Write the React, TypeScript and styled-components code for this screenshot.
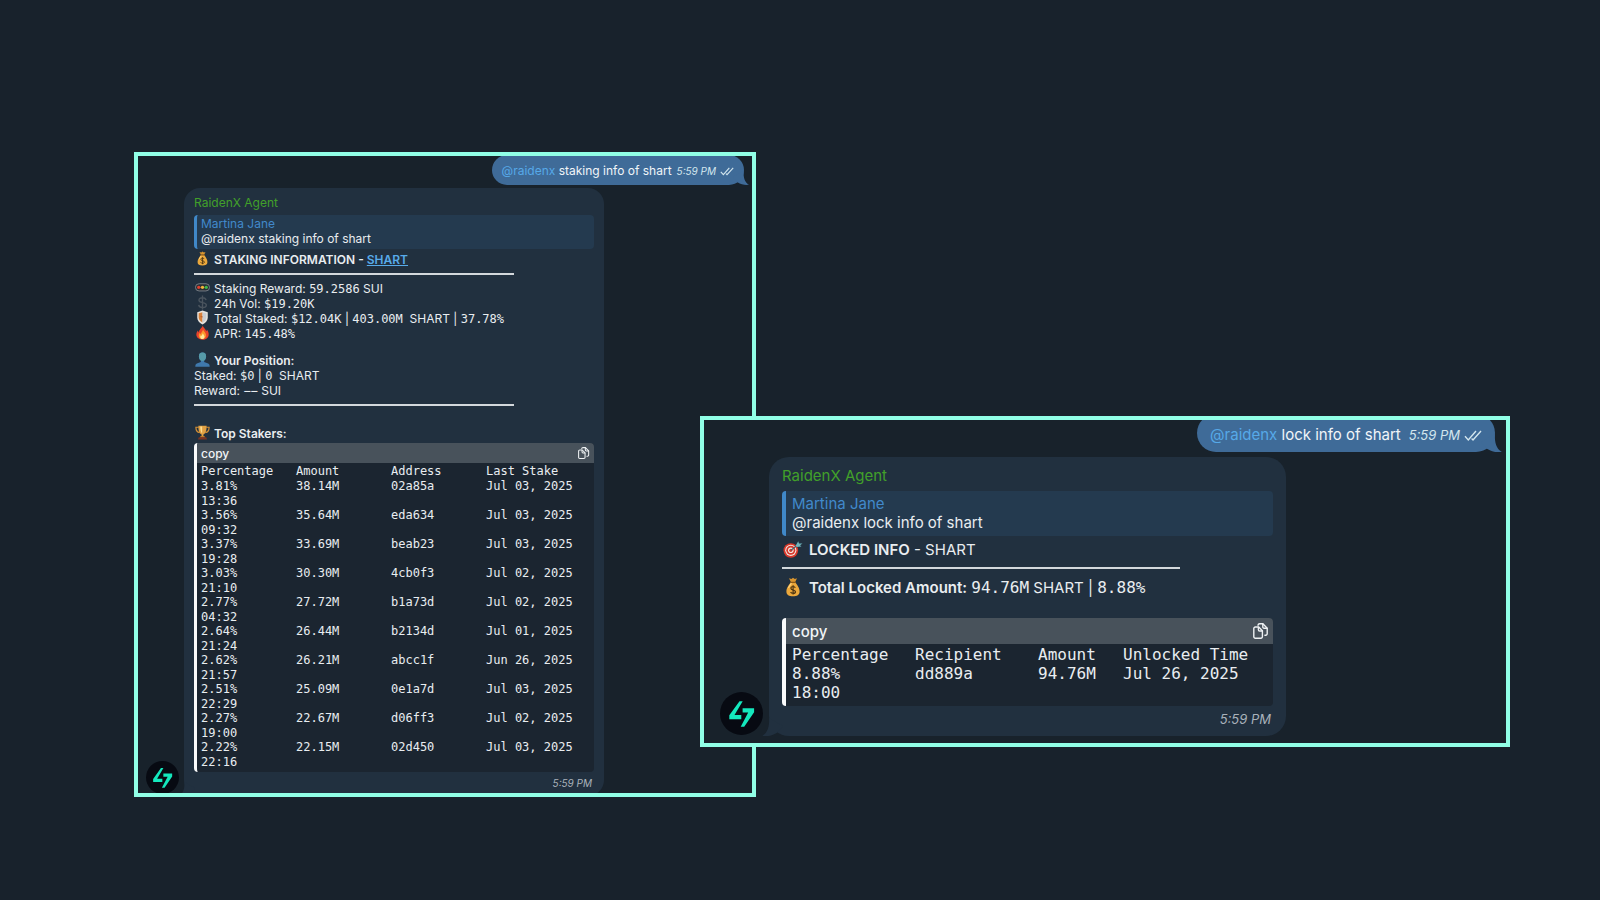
import React from "react";
import styled, { createGlobalStyle, ThemeProvider } from "styled-components";

const compact = {
  font: 12, mono: 12, small: 10, line: 15,
  avatar: 33, avatarGap: 5, avatarLift: 2, rowLeft: 8, rowPull: -3,
  bubbleWidth: 420, padTop: 7, padX: 10, padBottom: 5, radius: 16,
  quoteGap: 5, quotePadTop: 1, quotePadBottom: 3, bar: 3, quoteLeft: 4,
  icon: 15, slot: 20, titleGap: 3, ruleGap: 6, ruleAfter: 6, ruleWidth: "80%",
  codeHead: 20, codeEnd: 3, copyIcon: 12, timeGap: 4,
  outHeight: 30, outTop: -1, outRight: 8, outPad: 10, outAfter: 3, outShift: 1, outGap: 5, ticks: 14,
  tail: 16,
};

const large: typeof compact = {
  font: 15, mono: 16, small: 13, line: 19,
  avatar: 43, avatarGap: 6, avatarLift: 1, rowLeft: 16, rowPull: 7,
  bubbleWidth: 517, padTop: 9, padX: 13, padBottom: 7, radius: 20,
  quoteGap: 6, quotePadTop: 3, quotePadBottom: 4, bar: 4, quoteLeft: 6,
  icon: 20, slot: 27, titleGap: 4, ruleGap: 8, ruleAfter: 9, ruleWidth: "81%",
  codeHead: 26, codeEnd: 4, copyIcon: 16, timeGap: 4,
  outHeight: 38, outTop: -6, outRight: 11, outPad: 13, outAfter: 5, outShift: 2, outGap: 8, ticks: 18,
  tail: 21,
};

declare module "styled-components" {
  export interface DefaultTheme {
    font: number; mono: number; small: number; line: number;
    avatar: number; avatarGap: number; avatarLift: number; rowLeft: number; rowPull: number;
    bubbleWidth: number; padTop: number; padX: number; padBottom: number; radius: number;
    quoteGap: number; quotePadTop: number; quotePadBottom: number; bar: number; quoteLeft: number;
    icon: number; slot: number; titleGap: number; ruleGap: number; ruleAfter: number; ruleWidth: string;
    codeHead: number; codeEnd: number; copyIcon: number; timeGap: number;
    outHeight: number; outTop: number; outRight: number; outPad: number; outAfter: number;
    outShift: number; outGap: number; ticks: number; tail: number;
  }
}

const Global = createGlobalStyle`
  *, *::before, *::after { box-sizing: border-box; }
  body { margin: 0; background: #18222c; }
`;

const Stage = styled.main`
  display: flex;
  align-items: flex-start;
  min-height: 100vh;
  padding: 152px 90px 100px 134px;
  font-family: Inter, "Liberation Sans", sans-serif;
  color: #e9edf0;
`;

const Panel = styled.section<{ $grow: number }>`
  flex: ${(p) => p.$grow} 1 0;
  min-width: 0;
  overflow: hidden;
  border: 4px solid #90ffe6;
  background: #18222b;
  font-size: ${(p) => p.theme.font}px;
  line-height: ${(p) => p.theme.line}px;
  white-space: nowrap;
`;

const FrontPanel = styled(Panel)`
  position: relative;
  margin: 264px 0 0 -56px;
`;

const Outgoing = styled.div`
  position: relative;
  display: flex;
  align-items: center;
  width: fit-content;
  height: ${(p) => p.theme.outHeight}px;
  margin: ${(p) => `${p.theme.outTop}px ${p.theme.outRight}px ${p.theme.outAfter}px auto`};
  padding: ${(p) => `${p.theme.outShift}px ${p.theme.outPad}px 0`};
  border-radius: ${(p) => p.theme.outHeight / 2}px;
  background: #3f6b98;
  color: #f1f5f8;
`;

const Mention = styled.a`
  color: #56a9e8;
  text-decoration: none;
`;

const Time = styled.time`
  font-size: ${(p) => p.theme.small}px;
  font-style: italic;
`;

const SentTime = styled(Time)`
  display: flex;
  align-items: center;
  gap: 4px;
  margin-left: ${(p) => p.theme.outGap}px;
  padding-top: 2px;
  color: #d3e6ee;
`;

const Tail = styled.svg<{ $side: "left" | "right" }>`
  position: absolute;
  bottom: 0;
  ${(p) => p.$side}: -${(p) => Math.round(p.theme.tail / 3)}px;
  width: ${(p) => p.theme.tail}px;
  height: auto;
  transform: ${(p) => (p.$side === "left" ? "scaleX(-1)" : "none")};
`;

const MessageRow = styled.div`
  display: flex;
  align-items: flex-end;
  gap: ${(p) => p.theme.avatarGap}px;
  margin-bottom: ${(p) => p.theme.rowPull}px;
  padding-left: ${(p) => p.theme.rowLeft}px;
`;

const Avatar = styled.svg`
  flex: none;
  width: ${(p) => p.theme.avatar}px;
  height: ${(p) => p.theme.avatar}px;
  margin-bottom: ${(p) => p.theme.avatarLift}px;
  position: relative;
  z-index: 1;
`;

const Bubble = styled.article`
  position: relative;
  display: flex;
  flex-direction: column;
  width: 100%;
  max-width: ${(p) => p.theme.bubbleWidth}px;
  padding: ${(p) => `${p.theme.padTop}px ${p.theme.padX}px ${p.theme.padBottom}px`};
  border-radius: ${(p) => p.theme.radius}px;
  background: #21303f;
`;

const Sender = styled.div`
  color: #41a02a;
`;

const Quote = styled.blockquote`
  margin: ${(p) => p.theme.quoteGap}px 0 0;
  padding: ${(p) => `${p.theme.quotePadTop}px 0 ${p.theme.quotePadBottom}px ${p.theme.quoteLeft}px`};
  border-left: ${(p) => p.theme.bar}px solid #4088c8;
  border-radius: 4px;
  background: #243a4f;
`;

const QuoteName = styled.div`
  color: #4189cb;
`;

const Subtitle = styled.h3`
  margin: 0;
  font-size: inherit;
  font-weight: 600;
  white-space: pre;
`;

const Title = styled(Subtitle)`
  margin-top: ${(p) => p.theme.titleGap}px;
`;

const Light = styled.span`
  font-weight: 400;
`;

const Strong = styled.strong`
  font-weight: 600;
`;

const TokenLink = styled.a`
  color: #58abea;
`;

const Rule = styled.hr`
  width: ${(p) => p.theme.ruleWidth};
  height: 2px;
  margin: ${(p) => `${p.theme.ruleGap}px 0 ${p.theme.ruleAfter}px`};
  border: 0;
  background: #d3d8dc;
`;

const Group = styled.div<{ $before?: number; $after?: number }>`
  margin-top: ${(p) => p.$before ?? 0}px;
  margin-bottom: ${(p) => p.$after ?? 0}px;
`;

const Line = styled.div`
  height: ${(p) => p.theme.line}px;
  white-space: pre;
`;

const Slot = styled.span`
  display: inline-flex;
  align-items: center;
  width: ${(p) => p.theme.slot}px;
  height: ${(p) => p.theme.line}px;
  padding: 0 0 2px 1px;
  vertical-align: top;
`;

const Glyph = styled.svg`
  flex: none;
  width: ${(p) => p.theme.icon}px;
  height: ${(p) => p.theme.icon}px;
`;

const Mono = styled.span`
  font-family: "DejaVu Sans Mono", "Liberation Mono", monospace;
  font-size: ${(p) => p.theme.mono}px;
  line-height: 1;
`;

const Code = styled.div`
  border-left: ${(p) => p.theme.bar}px solid #fafbfc;
  border-radius: 4px;
  background: #1b2530;
  overflow: hidden;
`;

const CopyBar = styled.button`
  display: flex;
  align-items: center;
  justify-content: space-between;
  width: 100%;
  height: ${(p) => p.theme.codeHead}px;
  padding: 0 4px 0 ${(p) => p.theme.quoteLeft}px;
  border: 0;
  background: #48525b;
  color: #f1f4f6;
  font: inherit;
  font-weight: 500;
  cursor: pointer;
`;

const CopyIcon = styled.svg`
  width: ${(p) => p.theme.copyIcon}px;
  height: ${(p) => p.theme.copyIcon}px;
`;

const Table = styled.table`
  table-layout: fixed;
  width: 100%;
  margin: ${(p) => `1px 0 ${p.theme.codeEnd}px`};
  border-collapse: collapse;
  font-family: "DejaVu Sans Mono", "Liberation Mono", monospace;
  font-size: ${(p) => p.theme.mono}px;
  text-align: left;

  th, td {
    padding: 0 0 0 ${(p) => p.theme.quoteLeft}px;
    font-weight: 400;
    vertical-align: top;
  }
`;

const Clock = styled.div<{ $line: number }>`
  line-height: ${(p) => p.$line}px;
`;

const Received = styled(Time)`
  align-self: flex-end;
  margin-top: ${(p) => p.theme.timeGap}px;
  padding-right: 2px;
  color: #a9b2bb;
`;

const MoneyBag = () => (
  <Glyph viewBox="0 0 20 20" aria-label="money bag">
    <path d="M6 1.2 8.4 2 10 .8 11.8 2 14 1.2 12.2 5H7.9Z" fill="#d9952f" />
    <path d="M7.8 5.2h4.5C14 8 16.6 10.500 16.600 14.500c0 3.600-2.600 4.700-6.600 4.700s-6.600-1.100-6.600-4.700C3.400 10.500 6.100 8 7.800 5.200Z" fill="#eba83c" />
    <path d="M5.500 11c.8-2 2.200-3.600 3-4.800" stroke="#ffd27a" strokeWidth="1.200" fill="none" />
    <path d="M7.300 5.400h5.500" stroke="#8d5a17" strokeWidth="1.300" />
    <path d="M12.300 10.700c-.4-.8-1.200-1.200-2.200-1.200-1.300 0-2.200.6-2.200 1.700 0 2.500 4.600 1.200 4.600 3.600 0 1.100-1 1.700-2.400 1.700-1.200 0-2.100-.5-2.500-1.400M10.100 8.300v9.300" stroke="#4d3412" strokeWidth="1.200" fill="none" />
  </Glyph>
);

const Signal = () => (
  <Glyph viewBox="0 0 20 20" aria-label="signal">
    <rect x=".6" y="5" width="18.800" height="9.600" rx="4.800" fill="#2a2f35" stroke="#858c93" strokeWidth="1.100" />
    <circle cx="5" cy="9.800" r="2.200" fill="#e2402f" />
    <circle cx="10" cy="9.800" r="2.200" fill="#f2b53a" />
    <circle cx="15" cy="9.800" r="2.200" fill="#40b84c" />
  </Glyph>
);

const Dollar = () => (
  <Glyph viewBox="0 0 20 20" aria-label="dollar">
    <path d="M14.800 6.800C14.300 4.700 12.500 3.600 10 3.600c-2.800 0-4.700 1.300-4.700 3.300 0 4.500 9.800 2 9.800 6.500 0 2-2 3.400-5 3.400-2.800 0-4.800-1.200-5.200-3.500M10 .8v18.600" stroke="#4a545e" strokeWidth="1.800" fill="none" />
  </Glyph>
);

const Shield = () => (
  <Glyph viewBox="0 0 20 20" aria-label="shield">
    <path d="M10 .8 17 3v7c0 4.500-3.200 7.300-7 9.200C6.200 17.300 3 14.500 3 10V3Z" fill="#e9e4dd" />
    <path d="M10 3v13.700C7 15 4.900 13 4.900 9.800V4.300Z" fill="#d9813a" />
    <path d="M10 3v13.700C13 15 15.100 13 15.100 9.800V4.300Z" fill="#c9cdd2" />
    <path d="M10 3v5L6.500 9 10 10v6.700" fill="#b85a2a" />
  </Glyph>
);

const Fire = () => (
  <Glyph viewBox="0 0 20 20" aria-label="fire">
    <path d="M10.300.5c.6 2.700 4 4.700 4.700 7.800.6-.6.8-1.500.8-2.300 1.700 2 2.700 4.500 2.400 7.200-.4 3.800-3.700 6.300-8.200 6.300s-7.900-2.500-8.200-6.100C1.600 10.800 2.600 9 3.900 7.400c.1 1.100.5 2 1.200 2.600C5 5.500 9.500 4.300 10.300.5Z" fill="#e9432a" />
    <path d="M10.700 5.500c.2 2.500 3.800 4 4 7.500.2 3.400-1.700 5.700-4.800 5.700-3 0-5.100-2-4.900-5 .1-1.500.8-2.500 1.700-3.400.2 1 .6 1.500 1.200 1.900 0-2.700 2.600-3.900 2.800-6.700Z" fill="#fb9a2c" />
    <path d="M10.400 11c.4 1.700 2.400 2.600 2.300 4.700-.1 1.900-1.200 3-2.900 3S7 17.500 7 15.900c0-1 .4-1.600.9-2.200.2.500.5.8.9 1 .1-1.500 1.400-2.200 1.600-3.700Z" fill="#ffe99a" />
  </Glyph>
);

const Person = () => (
  <Glyph viewBox="0 0 20 20" aria-label="person">
    <path d="M10 .6c3.300 0 4.900 2.200 4.800 5.300-.1 2.500-1.200 4.500-2.600 5.500v1.800l5.300 2c1.500.6 2 1.800 2.100 4.300H.4c.1-2.500.6-3.700 2.100-4.300l5.300-2v-1.800c-1.400-1-2.500-3-2.600-5.500C5.100 2.800 6.700.6 10 .6Z" fill="#3f79ad" />
    <path d="M10 .6c3.300 0 4.900 2.200 4.800 5.300-.1 2.500-1.200 4.500-2.600 5.500-.8.6-3.600.6-4.400 0-1.400-1-2.500-3-2.600-5.500C5.100 2.800 6.700.6 10 .6Z" fill="#569aa8" />
  </Glyph>
);

const Trophy = () => (
  <Glyph viewBox="0 0 20 20" aria-label="trophy">
    <path d="M5 3H1.200c0 4 1.500 6.700 5 7.200M15 3h3.800c0 4-1.500 6.700-5 7.200" stroke="#d38f35" strokeWidth="1.600" fill="none" />
    <path d="M4.500 1h11c0 6-1 10.500-4.300 11.500v2.500H8.800v-2.500C5.500 11.500 4.500 7 4.500 1Z" fill="#e0a043" />
    <path d="M7 2h2.500v9C7.500 9.500 7 6 7 2Z" fill="#ffdc8c" />
    <path d="M7.500 14.500h5l1 2h-7Z" fill="#c07a2a" />
    <path d="M5 16.400h10l1 3H4Z" fill="#7d3420" />
  </Glyph>
);

const Target = () => (
  <Glyph viewBox="0 0 20 20" aria-label="target">
    <ellipse cx="7.800" cy="11.500" rx="7.300" ry="7.300" fill="#d8382b" />
    <circle cx="7.800" cy="11.300" r="5.600" fill="#f1e6e0" />
    <circle cx="7.800" cy="11.300" r="4.500" fill="#d8382b" />
    <circle cx="7.800" cy="11.300" r="2.800" fill="#f1e6e0" />
    <circle cx="7.800" cy="11.300" r="1.600" fill="#d8382b" />
    <path d="M8 11.300 14.500 6" stroke="#46616b" strokeWidth="1.200" />
    <path d="M12.700 6.700 15.200 2.300 16 4.500 19.500 4.600 17 6.300 18.500 7.500 13.800 7.900Z" fill="#6fb6bd" />
  </Glyph>
);

const Copy = () => (
  <CopyIcon viewBox="0 0 16 16" fill="none" stroke="#eef1f3" strokeWidth="1.400" strokeLinejoin="round" strokeLinecap="round" aria-hidden="true">
    <path d="M.8 5.500A1.500 1.500 0 0 1 2.300 4h3.400l3.700 3.800v6a1.500 1.500 0 0 1-1.500 1.500H2.300a1.500 1.500 0 0 1-1.500-1.500Z" />
    <path d="M5.400 4.200v2.600A1.200 1.200 0 0 0 6.600 8h2.600" />
    <path d="M5 2.200A1.700 1.700 0 0 1 6.600.8h3.300l4.300 4.400v5.600a1.500 1.500 0 0 1-1.500 1.500h-.8" />
    <path d="M9.800 1v3a1.200 1.200 0 0 0 1.200 1.200h3" />
  </CopyIcon>
);

const Ticks = styled.svg`
  width: ${(p) => p.theme.ticks}px;
  height: auto;
`;

const DoubleTick = () => (
  <Ticks viewBox="0 0 18 11" fill="none" stroke="#d3e6ee" strokeWidth="1.400" aria-label="read">
    <path d="M1 6.300 4.300 9.900 12 1M7.600 8.600 9 9.900 17 1" />
  </Ticks>
);

const BubbleTail = ({ side, color }: { side: "left" | "right"; color: string }) => (
  <Tail $side={side} viewBox="0 0 16 14" aria-hidden="true">
    <path d="M10.500 0C10.500 7 11.500 11 16 13.800C12 14.300 8 13.500 4.500 11.300L0 6Z" fill={color} />
  </Tail>
);

const Bolt = () => (
  <Avatar viewBox="0 0 43 43" aria-label="RaidenX">
    <circle cx="21.500" cy="21.500" r="21.500" fill="#070a12" />
    <path d="M19.500 9.200h3.200L14.500 23h6.800v4.300H9.300v-4Z" fill="#14e8bd" />
    <path d="M22.600 16.300h11.500v4L24.200 34.800h-3.500l7.500-14.200h-5.600Z" fill="#14e8bd" />
  </Avatar>
);

function Sent({ text }: { text: string }) {
  return (
    <Outgoing>
      <span><Mention href="#raidenx">@raidenx</Mention> {text}</span>
      <SentTime>5:59 PM <DoubleTick /></SentTime>
      <BubbleTail side="right" color="#3f6b98" />
    </Outgoing>
  );
}

function Reply({ text, children }: { text: string; children: React.ReactNode }) {
  return (
    <MessageRow>
      <Bolt />
      <Bubble>
        <BubbleTail side="left" color="#21303f" />
        <Sender>RaidenX Agent</Sender>
        <Quote>
          <QuoteName>Martina Jane</QuoteName>
          <div>@raidenx {text}</div>
        </Quote>
        {children}
        <Received>5:59 PM</Received>
      </Bubble>
    </MessageRow>
  );
}

type CodeTableProps = { heads: string[]; widths: number[]; rows: string[][]; clockLine: number };

function CodeTable({ heads, widths, rows, clockLine }: CodeTableProps) {
  return (
    <Code>
      <CopyBar type="button">copy <Copy /></CopyBar>
      <Table>
        <colgroup>{widths.map((w, i) => <col key={i} width={w} />)}<col /></colgroup>
        <thead><tr>{heads.map((h) => <th key={h} scope="col">{h}</th>)}</tr></thead>
        <tbody>
          {rows.map(([share, clock, ...rest]) => (
            <tr key={share}>
              <td>{share}<Clock $line={clockLine}>{clock}</Clock></td>
              {rest.map((cell) => <td key={cell}>{cell}</td>)}
            </tr>
          ))}
        </tbody>
      </Table>
    </Code>
  );
}

const stakers = [
  ["3.81%", "13:36", "38.14M", "02a85a", "Jul 03, 2025"],
  ["3.56%", "09:32", "35.64M", "eda634", "Jul 03, 2025"],
  ["3.37%", "19:28", "33.69M", "beab23", "Jul 03, 2025"],
  ["3.03%", "21:10", "30.30M", "4cb0f3", "Jul 02, 2025"],
  ["2.77%", "04:32", "27.72M", "b1a73d", "Jul 02, 2025"],
  ["2.64%", "21:24", "26.44M", "b2134d", "Jul 01, 2025"],
  ["2.62%", "21:57", "26.21M", "abcc1f", "Jun 26, 2025"],
  ["2.51%", "22:29", "25.09M", "0e1a7d", "Jul 03, 2025"],
  ["2.27%", "19:00", "22.67M", "d06ff3", "Jul 02, 2025"],
  ["2.22%", "22:16", "22.15M", "02d450", "Jul 03, 2025"],
];

const locks = [["8.88%", "18:00", "dd889a", "94.76M", "Jul 26, 2025"]];

export default function App() {
  return (
    <>
      <Global />
      <Stage>
        <ThemeProvider theme={compact}>
          <Panel $grow={614}>
            <Sent text="staking info of shart" />
            <Reply text="staking info of shart">
              <Title><Slot><MoneyBag /></Slot>STAKING INFORMATION - <TokenLink href="#shart">SHART</TokenLink></Title>
              <Rule />
              <Group>
                <Line><Slot><Signal /></Slot>Staking Reward: <Mono>59.2586</Mono> SUI</Line>
                <Line><Slot><Dollar /></Slot>24h Vol: <Mono>$19.20K</Mono></Line>
                <Line><Slot><Shield /></Slot>Total Staked: <Mono>$12.04K</Mono> | <Mono>403.00M</Mono>{"  SHART | "}<Mono>37.78%</Mono></Line>
                <Line><Slot><Fire /></Slot>APR: <Mono>145.48%</Mono></Line>
              </Group>
              <Group $before={12}>
                <Subtitle><Slot><Person /></Slot>Your Position:</Subtitle>
                <Line>Staked: <Mono>$0</Mono> | <Mono>0</Mono>{"  SHART"}</Line>
                <Line>Reward: <Mono>−−</Mono> SUI</Line>
              </Group>
              <Rule />
              <Group $before={14} $after={2}>
                <Subtitle><Slot><Trophy /></Slot>Top Stakers:</Subtitle>
              </Group>
              <CodeTable
                heads={["Percentage", "Amount", "Address", "Last Stake"]}
                widths={[95, 95, 95]}
                rows={stakers}
                clockLine={14}
              />
            </Reply>
          </Panel>
        </ThemeProvider>
        <ThemeProvider theme={large}>
          <FrontPanel $grow={802}>
            <Sent text="lock info of shart" />
            <Reply text="lock info of shart">
              <Title><Slot><Target /></Slot>LOCKED INFO<Light> - SHART</Light></Title>
              <Rule />
              <Group $after={21}>
                <Line><Slot><MoneyBag /></Slot><Strong>Total Locked Amount:</Strong> <Mono>94.76M</Mono> SHART | <Mono>8.88%</Mono></Line>
              </Group>
              <CodeTable
                heads={["Percentage", "Recipient", "Amount", "Unlocked Time"]}
                widths={[123, 123, 85]}
                rows={locks}
                clockLine={19}
              />
            </Reply>
          </FrontPanel>
        </ThemeProvider>
      </Stage>
    </>
  );
}
